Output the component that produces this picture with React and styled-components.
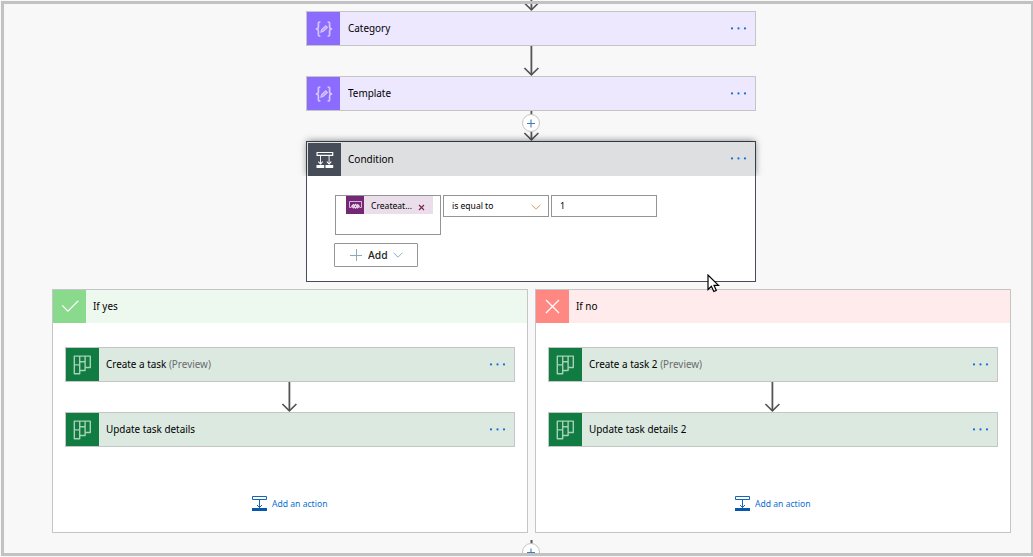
import React from "react";
import styled, { createGlobalStyle } from "styled-components";

const Global = createGlobalStyle`
  * { box-sizing: border-box; }
  body { margin: 0; background: #f8f8f8; overflow: hidden; font-family: "Noto Sans", "Open Sans", sans-serif; color: #000; }
  svg { display: block; flex: none; }
`;

const Frame = styled.div`
  position: relative;
  width: 1032px;
  height: 555px;
  margin: 1px 0 0 1px;
  border: 3px solid #c2c2c2;
  border-right-width: 2px;
  background: #f8f8f8;
`;

const Flow = styled.main`
  display: flex;
  flex-direction: column;
  align-items: center;
  width: 1062px;
  margin: -4px 0 0 -4px;
`;

const Trunk = styled.div`
  display: flex;
  flex-direction: column;
  width: 450px;
`;

const Card = styled.article`
  display: flex;
  width: 450px;
  height: 35px;
  border: 1px solid #c5c5c5;
  background: ${(p) => (p.$tone === "purple" ? "#ede8fe" : "#dbe9e1")};
`;

const IconTile = styled.div`
  display: grid;
  place-items: center;
  flex: none;
  width: 33px;
  height: 33px;
  background: ${(p) => p.$bg};
`;

const Title = styled.span`
  flex: 1;
  margin-left: ${(p) => p.$gap || 7}px;
  font-size: 11px;
  line-height: 31px;
  white-space: pre;
`;

const Fit = styled.span`
  display: inline-block;
  transform: scaleX(${(p) => p.$x || 0.9});
  transform-origin: 0 50%;
`;

const Note = styled.span`
  color: #6b6b6b;
`;

const Menu = styled.div`
  display: flex;
  align-items: center;
  height: 32px;
  margin-right: 8px;
`;

const Connector = styled.div`
  display: flex;
  justify-content: center;
  height: ${(p) => p.$h}px;
  padding-right: ${(p) => p.$inset || 0}px;
`;

const ConditionBox = styled.section`
  height: 141px;
  border: 1px solid #474d58;
  background: #fff;
`;

const ConditionHead = styled.header`
  display: flex;
  height: 34px;
  padding: 1px 0 0 1px;
  background: #dddfe1;
  box-shadow: 0 -1px 7px rgba(0, 0, 0, 0.5);
  clip-path: inset(-12px -12px 0 -12px);
`;

const ConditionMenu = styled.div`
  margin-top: -1px;
`;

const Rule = styled.div`
  display: flex;
  gap: 2px;
  padding: 19px 0 0 28px;
`;

const Field = styled.div`
  display: flex;
  align-items: center;
  justify-content: space-between;
  width: 106px;
  height: 22px;
  padding: 0 7px 1px 8px;
  border: 1px solid #959595;
  font-size: 9px;
  svg { margin-top: 3px; }
`;

const TokenField = styled.div`
  display: flex;
  width: 106px;
  height: 40px;
  padding-left: 10px;
  border: 1px solid #959595;
`;

const Token = styled.div`
  display: flex;
  align-items: center;
  width: 87px;
  height: 18px;
  background: #ebdeeb;
  font-size: 9px;
  line-height: 20px;
`;

const TokenIcon = styled.div`
  display: grid;
  place-items: center;
  flex: none;
  width: 18px;
  height: 18px;
  margin-right: 7px;
  background: #742774;
`;

const TokenText = styled.span`
  flex: none;
  width: 47px;
  height: 18px;
  white-space: nowrap;
`;

const RemoveMark = styled.svg`
  margin-top: 5px;
`;

const AddButton = styled.button`
  display: flex;
  align-items: center;
  width: 84px;
  height: 24px;
  margin: 8px 0 0 27px;
  padding: 0 0 1px 15px;
  border: 1px solid #959595;
  border-radius: 1px;
  background: #fff;
  color: #222;
  font: 500 11.5px "Noto Sans", sans-serif;
`;

const AddLabel = styled.span`
  width: 20px;
  margin: 0 5px 0 6px;
  text-align: left;
`;

const Branches = styled.div`
  display: flex;
  gap: 7px;
  width: 959px;
  margin-top: 7px;
`;

const Branch = styled.section`
  width: 476px;
  height: 244px;
  border: 1px solid #c5c5c5;
  background: #fff;
`;

const BranchHead = styled.header`
  display: flex;
  height: 33px;
  background: ${(p) => p.$bg};
`;

const BranchBody = styled.div`
  display: flex;
  flex-direction: column;
  padding: 24px 12px 0;
`;

const AddAction = styled.a`
  display: flex;
  align-items: center;
  gap: 5px;
  margin: 49px 0 0 187px;
  height: 15px;
  color: #0a6fd0;
  font-size: 9px;
  white-space: nowrap;
`;

const Pointer = styled.svg`
  position: absolute;
  left: 703px;
  top: 270px;
`;

const FrameEdge = styled.div`
  position: absolute;
  left: -3px;
  right: -2px;
  height: 3px;
  top: ${(p) => p.$top}px;
  background: #c2c2c2;
`;

const PlusMark = ({ y }) => (
  <g>
    <circle cx="10" cy={y} r="8.5" fill="#fff" stroke="#c5c5c5" />
    <path d={`M6 ${y + 0.5}h8M10 ${y - 3.5}v8`} stroke="#3f7cc6" strokeWidth="1.1" />
  </g>
);

const Arrow = ({ h, plus }) => (
  <svg width="20" height={h} viewBox={`0 0 20 ${h}`} fill="none">
    <path d={`M10.4 0V${h - 1}`} stroke="#555" strokeWidth="1.8" />
    <path d={`M3.4 ${h - 8}L10.4 ${h - 1.2}L17.4 ${h - 8}`} stroke="#555" strokeWidth="1.7" />
    {plus && <PlusMark y={12} />}
  </svg>
);

const ComposeIcon = () => (
  <svg width="18" height="16" viewBox="0 0 18 16" fill="none" stroke="#d3c6ff" strokeWidth="1.7">
    <path d="M5.4 1C3 1 3.4 2 3.4 4V6C3.4 7.4 2.4 8 .8 8C2.4 8 3.4 8.6 3.4 10V12C3.4 14 3 15 5.4 15M12.6 1C15 1 14.6 2 14.6 4V6C14.6 7.4 15.6 8 17.2 8C15.6 8 14.6 8.6 14.6 10V12C14.6 14 15 15 12.6 15" />
    <path d="M6 11l.7-2.4 4-3.8 1.7 1.7-4 3.8z" strokeWidth="1.2" fill="#b6a2ff" />
  </svg>
);

const ConditionIcon = () => (
  <svg width="18" height="18" viewBox="0 0 18 18" fill="none" stroke="#fff">
    <path d="M1.1 1.5h15.6v2.9H1.1z" strokeWidth="1.2" />
    <path d="M4.5 5v8M13.1 5v8" strokeWidth=".9" />
    <path d="M2.3 10.6l2.2 2.4 2.2-2.4M10.9 10.6l2.2 2.4 2.2-2.4" strokeWidth="1.1" />
    <path d="M.5 14h7.7v3H.5zM9.5 14h7.7v3H9.5z" fill="#fff" stroke="none" />
  </svg>
);

const PlannerIcon = () => (
  <svg width="19" height="20" viewBox="0 0 19 20" fill="none" stroke="#a9d0b8" strokeWidth="1.4" strokeLinejoin="round">
    <path d="M1.3 1.1h16v11.4h-5.2v3H6.7v3.2H1.3zM6.7 1.1v14.4M12.1 1.1v11.4M1.3 9.9h5.4M6.7 6.8h5.4" />
  </svg>
);

const Chevron = ({ color }) => (
  <svg width="10" height="6" viewBox="0 0 10 6" fill="none" stroke={color}>
    <path d="M.5.7L5 5.2L9.5.7" />
  </svg>
);

const ActionIcon = () => (
  <svg width="15" height="15" viewBox="0 0 15 15" fill="none" stroke="#1763b6">
    <path d="M.5.5h14v3H.5zM7.5 4v8M5 9l2.5 2.5L10 9" />
    <path d="M0 12h15v3H0z" fill="#0758ab" stroke="none" />
  </svg>
);

const Dots = () => (
  <Menu>
    <svg width="17" height="4" viewBox="0 0 17 4" fill="#1272d8">
      <circle cx="2" cy="2.4" r="1.1" />
      <circle cx="8.5" cy="2.4" r="1.1" />
      <circle cx="15" cy="2.4" r="1.1" />
    </svg>
  </Menu>
);

const ActionCard = ({ tone, name, note }) => (
  <Card $tone={tone}>
    <IconTile $bg={tone === "purple" ? "#8c6cff" : "#107c41"}>
      {tone === "purple" ? <ComposeIcon /> : <PlannerIcon />}
    </IconTile>
    <Title $gap={tone === "purple" ? 7.6 : 7}>
      <Fit>{name}{note && <Note> {note}</Note>}</Fit>
    </Title>
    <Dots />
  </Card>
);

const BranchPanel = ({ yes, suffix }) => (
  <Branch>
    <BranchHead $bg={yes ? "#edf8ef" : "#ffebeb"}>
      <IconTile $bg={yes ? "#89da8d" : "#ff8982"}>
        <svg width="19" height="19" viewBox="0 0 19 19" fill="none" stroke="#fff" strokeWidth="1.2">
          <path d={yes ? "M2.2 8.4L7.9 14.1L18.3 3.8" : "M3 3l13 13M16 3l-13 13"} />
        </svg>
      </IconTile>
      <Title><Fit>{yes ? "If yes" : "If no"}</Fit></Title>
    </BranchHead>
    <BranchBody>
      <ActionCard tone="green" name={`Create a task${suffix}`} note="(Preview)" />
      <Connector $h={30} $inset={2}><Arrow h={30} /></Connector>
      <ActionCard tone="green" name={`Update task details${suffix}`} />
      <AddAction><ActionIcon /><Fit $x={0.955}>Add an action</Fit></AddAction>
    </BranchBody>
  </Branch>
);

export default function App() {
  return (
    <>
      <Global />
      <Frame>
        <Flow>
          <Trunk>
            <Connector $h={11}><Arrow h={11} /></Connector>
            <ActionCard tone="purple" name="Category" />
            <Connector $h={30}><Arrow h={30} /></Connector>
            <ActionCard tone="purple" name="Template" />
            <Connector $h={30}><Arrow h={30} plus /></Connector>
            <ConditionBox>
              <ConditionHead>
                <IconTile $bg="#474d58"><ConditionIcon /></IconTile>
                <Title><Fit $x={0.91}>Condition</Fit></Title>
                <ConditionMenu><Dots /></ConditionMenu>
              </ConditionHead>
              <Rule>
                <TokenField>
                  <Token>
                    <TokenIcon>
                      <svg width="13" height="10" viewBox="0 0 13 10" fill="none" stroke="#ecd7ec">
                        <path d="M2.5 7.5h-2v-6h12v6h-2" strokeWidth=".8" />
                        <path d="M4.8 4.2L2.8 6.2l2 2M8.2 4.2l2 2-2 2M6.5 4.4l1.7 1.8L6.5 8 4.8 6.2z" strokeWidth="1.3" />
                      </svg>
                    </TokenIcon>
                    <TokenText><Fit $x={0.95}>Createat...</Fit></TokenText>
                    <RemoveMark width="7" height="7" viewBox="0 0 7 7" stroke="#7d1a5c" strokeWidth="1.1">
                      <path d="M1 1l5 5M6 1L1 6" />
                    </RemoveMark>
                  </Token>
                </TokenField>
                <Field><Fit $x={0.95}>is equal to</Fit><Chevron color="#d9a066" /></Field>
                <Field>1</Field>
              </Rule>
              <AddButton>
                <svg width="12" height="12" viewBox="0 0 12 12" fill="none">
                  <path d="M0 6.5h12M6.5 0v12" stroke="#8aa9bd" />
                </svg>
                <AddLabel><Fit $x={0.9}>Add</Fit></AddLabel>
                <Chevron color="#7fb4d4" />
              </AddButton>
            </ConditionBox>
          </Trunk>
          <Branches>
            <BranchPanel yes suffix="" />
            <BranchPanel suffix=" 2" />
          </Branches>
          <Connector $h={24}>
            <svg width="20" height="24" viewBox="0 0 20 24" fill="none">
              <path d="M10.5 7v4" stroke="#555" strokeWidth="2" />
              <PlusMark y={19} />
            </svg>
          </Connector>
        </Flow>
        <FrameEdge $top={-3} />
        <FrameEdge $top={549} />
        <Pointer width="14" height="20" viewBox="0 0 14 20" fill="#fff" stroke="#000" strokeWidth="1.2">
          <path d="M1 1V15.5L4.4 12.3L6.8 17.5L9.3 16.4L7 11.3H11.5Z" />
        </Pointer>
      </Frame>
    </>
  );
}
